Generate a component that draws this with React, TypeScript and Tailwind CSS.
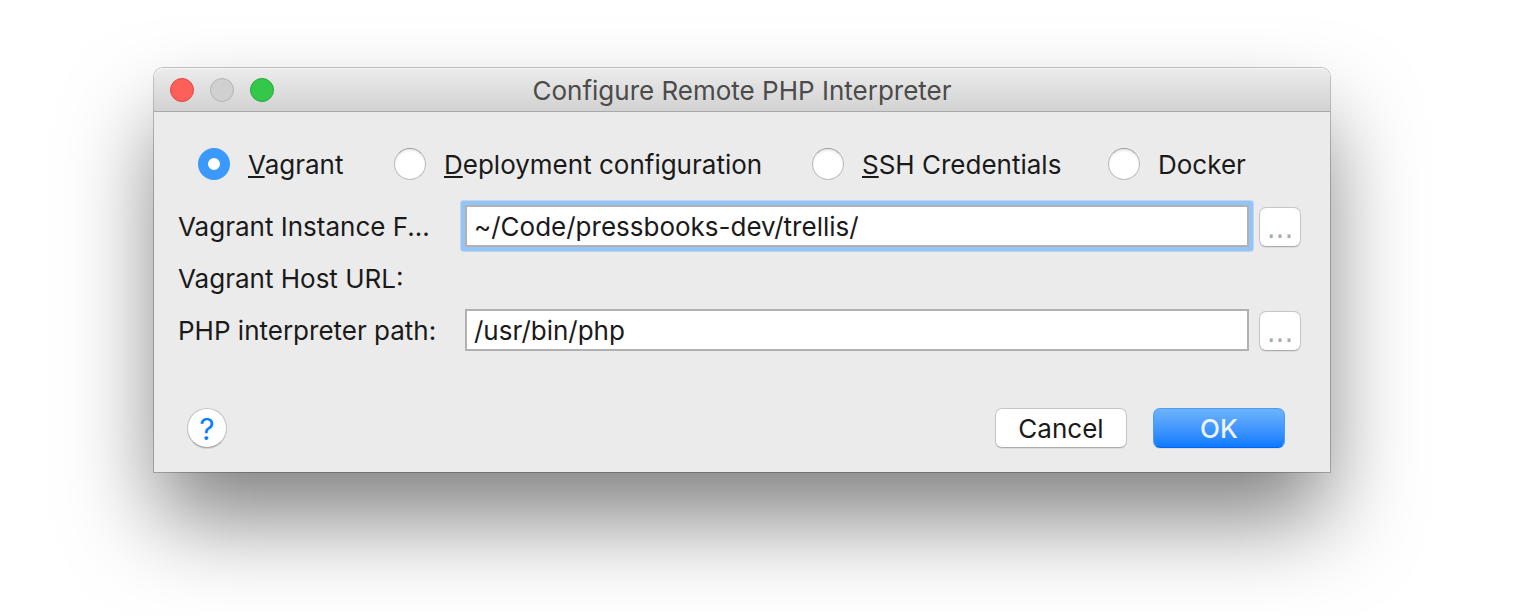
import { useState } from "react";

const connectionTypes = [
  { id: "vagrant", mnemonic: "V", rest: "agrant" },
  { id: "deployment", mnemonic: "D", rest: "eployment configuration" },
  { id: "ssh", mnemonic: "S", rest: "SH Credentials" },
  { id: "docker", mnemonic: "", rest: "Docker" },
];

function TitleBar() {
  return (
    <header className="flex h-11 items-center rounded-t-[9px] border-b border-[#a9a9a9] bg-linear-to-b from-[#ececec] to-[#d2d2d2] px-4 shadow-[inset_0_1px_0_#f6f6f6]">
      <div className="flex flex-1 gap-4">
        <button type="button" aria-label="Close" className="size-6 rounded-full border border-[#e2453f] bg-[#fd605b]" />
        <button type="button" aria-label="Minimize" disabled className="size-6 rounded-full border border-[#b4b4b4] bg-[#d0d0d0]" />
        <button type="button" aria-label="Zoom" className="size-6 rounded-full border border-[#24a935] bg-[#34c84a]" />
      </div>
      <h1 className="pt-[2px] text-[26px] leading-8 text-[#4b4b4b]">Configure Remote PHP Interpreter</h1>
      <div className="flex-1" />
    </header>
  );
}

function BrowseButton({ label }: { label: string }) {
  return (
    <button
      type="button"
      aria-label={label}
      className="flex h-10 w-[42px] shrink-0 items-end justify-center rounded-[7px] border border-[#c6c6c6] border-b-[#acacac] bg-white pb-px font-['DejaVu_Sans',sans-serif] text-[28px] leading-8 text-[#a9a9a9] shadow-[0_1px_0_#dcdcdc]"
    >
      ...
    </button>
  );
}

function PathField({ id, value, focused, onChange }: { id: string; value: string; focused?: boolean; onChange: (v: string) => void }) {
  return (
    <div className="flex items-end gap-[10px]">
      <input
        id={id}
        type="text"
        value={value}
        onChange={(e) => onChange(e.target.value)}
        className={
          "h-[42px] min-w-0 flex-1 border-2 border-[#b1b1b1] bg-white px-[7px] text-[26px] leading-8 text-[#1a1a1a] outline-none " +
          (focused ? "rounded-[1px] shadow-[0_0_0_4px_#96c3f6,0_0_0_5px_#bcd6f2]" : "")
        }
      />
      <BrowseButton label="Browse" />
    </div>
  );
}

export default function App() {
  const [type, setType] = useState("vagrant");
  const [folder, setFolder] = useState("~/Code/pressbooks-dev/trellis/");
  const [php, setPhp] = useState("/usr/bin/php");

  return (
    <main className="min-h-screen bg-white pt-[68px] pr-[204px] pl-[154px] font-['Inter',sans-serif] text-[26px] leading-8 text-[#1a1a1a]">
      <section className="rounded-t-[9px] bg-[#ebebeb] shadow-[0_0_0_1px_rgba(0,0,0,0.22),0_50px_90px_-4px_rgba(0,0,0,0.5)]">
        <TitleBar />
        <form onSubmit={(e) => e.preventDefault()} className="pt-9 pb-6">
          <div role="radiogroup" aria-label="Connection type" className="grid grid-cols-[196px_418px_296px_auto] pl-11">
            {connectionTypes.map((t) => (
              <label key={t.id} className="flex h-8 items-center gap-[18px] whitespace-nowrap">
                <input
                  type="radio"
                  name="connection"
                  checked={type === t.id}
                  onChange={() => setType(t.id)}
                  className="size-8 shrink-0 appearance-none rounded-full border border-[#bdbdbd] border-t-[#9c9c9c] bg-white shadow-[inset_0_2px_2px_#ececec] checked:border-[10px] checked:border-[#3b99fc] checked:shadow-none"
                />
                <span className="pt-[2px]">
                  {t.mnemonic && (
                    <span className="underline decoration-2 underline-offset-2 [text-decoration-skip-ink:none]">{t.mnemonic}</span>
                  )}
                  {t.rest}
                </span>
              </label>
            ))}
          </div>

          <div className="mt-5 grid auto-rows-[52px] grid-cols-[287px_minmax(0,1fr)] items-center pr-[29px] pl-6">
            <label htmlFor="folder" className="w-[262px] truncate pt-[2px]">Vagrant Instance F...</label>
            <PathField id="folder" value={folder} focused onChange={setFolder} />
            <span className="col-span-2 pt-[2px]">Vagrant Host URL:</span>
            <label htmlFor="php" className="pt-[2px]">PHP interpreter path:</label>
            <PathField id="php" value={php} onChange={setPhp} />
          </div>

          <footer className="mt-[52px] flex items-center gap-[26px] pr-[45px] pl-[33px]">
            <button
              type="button"
              aria-label="Help"
              className="mr-auto flex size-10 items-center justify-center rounded-full border border-[#c4c4c4] border-b-[#a8a8a8] bg-white pt-[2px] text-[30px] text-[#0a7cff] shadow-[0_1px_0_#d4d4d4]"
            >
              ?
            </button>
            <button
              type="button"
              className="h-10 w-[132px] rounded-[7px] border border-[#c6c6c6] border-b-[#acacac] bg-white pt-[2px] shadow-[0_1px_0_#dcdcdc]"
            >
              Cancel
            </button>
            <button
              type="submit"
              className="h-10 w-[132px] rounded-[7px] border border-[#4a9ff5] border-b-[#0a60f0] bg-linear-to-b from-[#6cb3fa] to-[#067aff] pt-[2px] font-medium text-[#eef3fb] shadow-[0_1px_0_#d4d8e0]"
            >
              OK
            </button>
          </footer>
        </form>
      </section>
    </main>
  );
}
